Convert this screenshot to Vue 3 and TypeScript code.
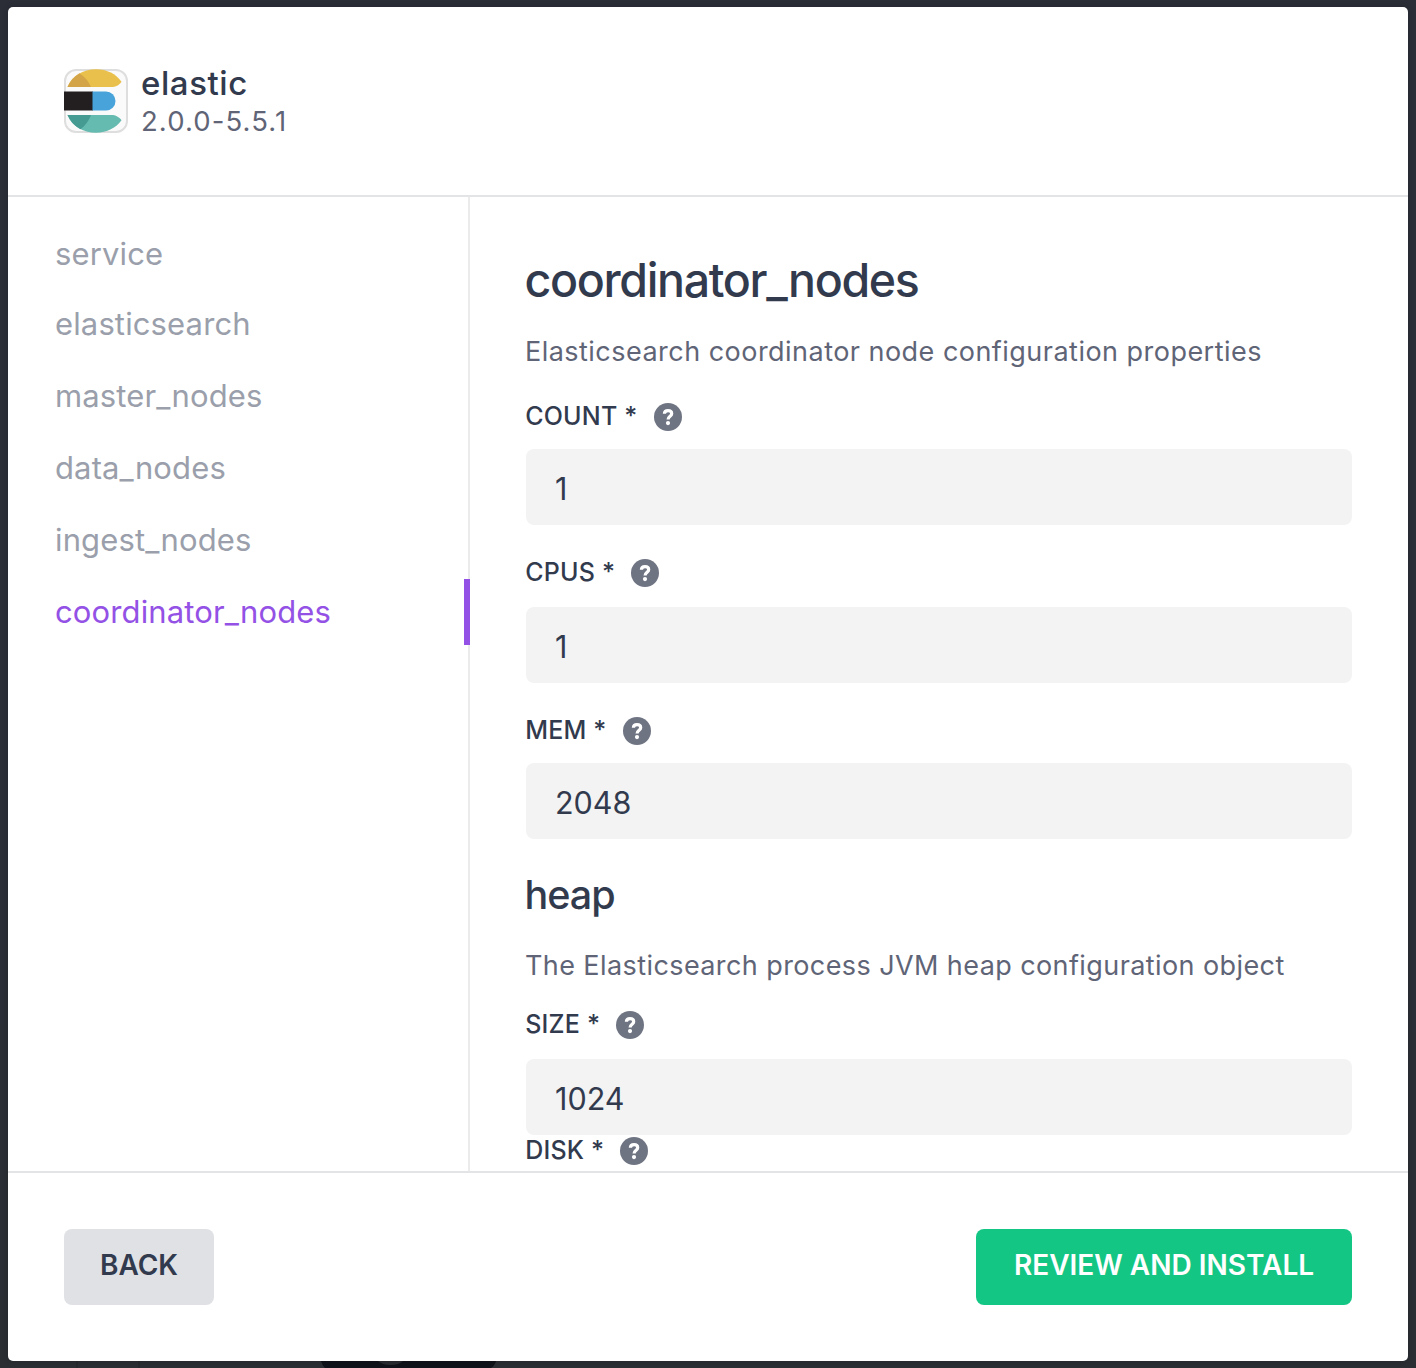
<script setup lang="ts">
import { ref } from 'vue'

interface Field {
  label: string
  value: string
  roomy?: boolean
}

const sections: string[] = [
  'service',
  'elasticsearch',
  'master_nodes',
  'data_nodes',
  'ingest_nodes',
  'coordinator_nodes',
]
const active = ref('coordinator_nodes')

const nodeFields = ref<Field[]>([
  { label: 'COUNT', value: '1' },
  { label: 'CPUS', value: '1', roomy: true },
  { label: 'MEM', value: '2048' },
])
const heapFields = ref<Field[]>([
  { label: 'SIZE', value: '1024', roomy: true },
  { label: 'DISK', value: '' },
])
</script>

<template>
  <div class="screen">
    <svg class="backdrop" width="1416" height="7" viewBox="0 0 1416 7" aria-hidden="true">
      <path d="M77 0v7M139 0v7" stroke="#25282d" stroke-width="1" />
      <path d="M321 0H496Q494.500 5 491 7H325Q322 4 321 0Z" fill="#10131a" />
      <path d="M378 0H403Q399 4 390.500 4Q382 4 378 0Z" fill="#292c31" />
    </svg>
    <div class="modal">
      <header class="header">
        <svg class="logo" width="64" height="64" viewBox="0 0 64 64" aria-hidden="true">
          <rect x="1" y="1" width="62" height="62" rx="11" fill="#fafafa" stroke="#dedede" stroke-width="2" />
          <path d="M3.500 18C8 7 19 .3 32 .3C43 .3 52 5 57.500 12.700C55 16 52 18 47 18Z" fill="#e9c04b" />
          <path d="M3.500 18C6 12 10 7.500 15.500 4.300C20.500 7.500 24.500 12 27 18Z" fill="#d4a548" />
          <path d="M0 22.500H29V41.500H0Z" fill="#231f20" />
          <path d="M28.500 22.500H42A9.500 9.500 0 0 1 42 41.500H28.500Z" fill="#47a3da" />
          <path d="M3.500 46H47C52 46 55 48 57.500 51.300C52 59 43 63.700 32 63.700C19 63.700 8 57 3.500 46Z" fill="#65bbaf" />
          <path d="M3.500 46H27C25 51.500 21.500 56.500 16.500 60.200C10.500 57 6 52 3.500 46Z" fill="#459b92" />
        </svg>
        <div class="package">
          <div class="name">elastic</div>
          <div class="version">2.0.0-5.5.1</div>
        </div>
      </header>

      <div class="body">
        <nav class="sidebar">
          <a
            v-for="section in sections"
            :key="section"
            class="tab"
            :class="{ active: section === active }"
            @click="active = section"
          >{{ section }}</a>
        </nav>

        <main class="content">
          <h1>coordinator_nodes</h1>
          <p class="description">Elasticsearch coordinator node configuration properties</p>
          <div v-for="field in nodeFields" :key="field.label" class="field" :class="{ roomy: field.roomy }">
            <label>
              <span>{{ field.label }} *</span>
              <svg width="28" height="28" viewBox="0 0 28 28" aria-hidden="true">
                <circle cx="14" cy="14" r="14" fill="#6f7483" />
                <path d="M10.400 10.800C10.400 8.700 11.900 7.700 14 7.700C16.200 7.700 17.700 8.800 17.700 10.700C17.700 13.200 14.100 13.400 14.100 16.500" fill="none" stroke="#fff" stroke-width="3.200" />
                <circle cx="14" cy="20.100" r="2.100" fill="#fff" />
              </svg>
            </label>
            <input v-model="field.value" type="text" />
          </div>

          <h2>heap</h2>
          <p class="description nested">The Elasticsearch process JVM heap configuration object</p>
          <div v-for="field in heapFields" :key="field.label" class="field last" :class="{ roomy: field.roomy }">
            <label>
              <span>{{ field.label }} *</span>
              <svg width="28" height="28" viewBox="0 0 28 28" aria-hidden="true">
                <circle cx="14" cy="14" r="14" fill="#6f7483" />
                <path d="M10.400 10.800C10.400 8.700 11.900 7.700 14 7.700C16.200 7.700 17.700 8.800 17.700 10.700C17.700 13.200 14.100 13.400 14.100 16.500" fill="none" stroke="#fff" stroke-width="3.200" />
                <circle cx="14" cy="20.100" r="2.100" fill="#fff" />
              </svg>
            </label>
            <input v-model="field.value" type="text" />
          </div>
        </main>
      </div>

      <footer class="footer">
        <button class="back" type="button">BACK</button>
        <button class="install" type="button">REVIEW AND INSTALL</button>
      </footer>
    </div>
  </div>
</template>

<style>
body {
  background: #2b2e37;
}
</style>

<style scoped>
.screen {
  position: relative;
  box-sizing: border-box;
  height: 1368px;
  padding: 7px 8px;
  overflow: hidden;
  background: linear-gradient(#2b2e37 0, #2b2e37 60%, #2b2e33 100%);
  color: #323a4e;
  font-family: Inter, 'Liberation Sans', sans-serif;
}

.backdrop {
  position: absolute;
  left: 0;
  bottom: 0;
}

.modal {
  position: relative;
  display: flex;
  flex-direction: column;
  height: 1354px;
  overflow: hidden;
  border-radius: 5px;
  background: #fff;
  box-shadow: 0 0 6px rgba(0, 0, 0, 0.2);
}

.header {
  display: flex;
  flex: none;
  box-sizing: border-box;
  height: 190px;
  padding: 56px 56px 0;
  border-bottom: 2px solid #e3e4e5;
}

.logo {
  flex: none;
  margin: 6px 13px 0 0;
}

.name {
  font-size: 33px;
  font-weight: 500;
  line-height: 40px;
  letter-spacing: 0.57px;
}

.version {
  color: #5f6577;
  font-size: 27.5px;
  line-height: 36px;
  letter-spacing: 1.1px;
}

.body {
  display: flex;
  flex: none;
  height: 974px;
}

.sidebar {
  display: flex;
  flex: none;
  flex-direction: column;
  box-sizing: border-box;
  width: 462px;
  padding: 24px 0 0 47px;
  border-right: 2px solid #ebebeb;
}

.tab {
  position: relative;
  height: 66px;
  margin-bottom: 6px;
  color: #9a9fab;
  font-size: 31px;
  line-height: 66px;
  letter-spacing: 0.13px;
  cursor: pointer;
}

.tab:first-child {
  margin-bottom: 4px;
}

.tab.active {
  color: #9351e5;
}

.tab.active::after {
  position: absolute;
  top: 0;
  right: -2px;
  width: 6px;
  height: 66px;
  background: #9351e5;
  content: '';
}

.content {
  flex: 1;
  min-width: 0;
  padding: 53px 56px 0;
  overflow: hidden;
}

h1,
h2,
p {
  margin: 0;
  white-space: nowrap;
}

h1 {
  margin-left: -1.5px;
  font-size: 46.5px;
  font-weight: 500;
  line-height: 60px;
  letter-spacing: -1.33px;
}

h2 {
  margin: -1px 0 0 -1.5px;
  font-size: 39.5px;
  font-weight: 500;
  line-height: 50px;
  letter-spacing: -1px;
}

.description {
  margin: 22px 0 29px -1px;
  color: #5f6577;
  font-size: 27px;
  line-height: 40px;
  letter-spacing: 0.47px;
}

.description.nested {
  margin: 26px 0 23px -1px;
  letter-spacing: 0.41px;
}

.field {
  margin-bottom: 32px;
}

.field.last {
  margin-bottom: 0;
}

label {
  display: flex;
  align-items: flex-end;
  gap: 16px;
  height: 30px;
  margin: 0 0 18px -0.8px;
  font-size: 25px;
  font-weight: 500;
  line-height: 29px;
  letter-spacing: 0.2px;
}

.roomy label {
  margin-bottom: 20px;
}

input {
  display: block;
  box-sizing: border-box;
  width: 100%;
  height: 76px;
  padding: 2px 29px 0;
  border: 0;
  border-radius: 8px;
  outline: 0;
  background: #f3f3f3;
  color: inherit;
  font: 400 30.5px Inter, 'Liberation Sans', sans-serif;
}

.footer {
  display: flex;
  flex: 1;
  align-items: flex-start;
  justify-content: space-between;
  padding: 56px 56px 0;
  border-top: 2px solid #e3e4e5;
}

button {
  box-sizing: border-box;
  height: 76px;
  padding: 0 0 4px;
  border: 0;
  border-radius: 8px;
  font: 600 28px Inter, 'Liberation Sans', sans-serif;
}

.back {
  width: 150px;
  background: #e0e1e5;
  color: #323a4e;
}

.install {
  width: 376px;
  background: #14c684;
  color: #fff;
}
</style>
